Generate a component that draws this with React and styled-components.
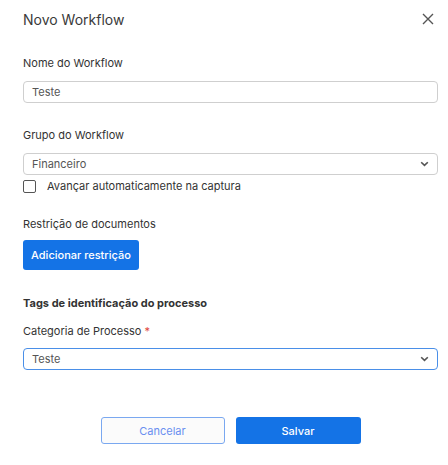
import React from "react";
import styled, { createGlobalStyle } from "styled-components";

const Global = createGlobalStyle`
  html, body { margin: 0; padding: 0; background: #fff; }
  body { font-family: Inter, "Noto Sans", sans-serif; color: #333; }
  * { box-sizing: border-box; }
`;

const Modal = styled.div`
  width: 448px;
  height: 465px;
  background: #fff;
  padding: 0 10px 0 23px;
  display: flex;
  flex-direction: column;
`;

const Header = styled.div`
  height: 38px;
  display: flex;
  align-items: center;
  justify-content: space-between;
`;

const Title = styled.h2`
  margin: 0;
  font-size: 14px;
  font-weight: 400;
  color: #3a3a3a;
`;

const CloseButton = styled.button`
  border: none;
  background: transparent;
  padding: 0;
  width: 20px;
  height: 20px;
  display: flex;
  align-items: center;
  justify-content: center;
  cursor: pointer;
`;

const Field = styled.div`
  display: flex;
  flex-direction: column;
  margin-top: ${(p) => p.$mt || 0}px;
`;

const Label = styled.label`
  font-size: 11px;
  line-height: 14px;
  color: #333;
  margin-bottom: ${(p) => p.$mb ?? 11}px;
`;

const Req = styled.span`
  color: #e0463b;
`;

const Input = styled.div`
  height: 22px;
  border: 1px solid ${(p) => (p.$focus ? "#4a8fe8" : "#cfcfcf")};
  border-radius: 4px;
  background: #fff;
  display: flex;
  align-items: center;
  justify-content: space-between;
  padding: 0 8px 0 8px;
  font-size: 11px;
  color: #555;
`;

const CheckRow = styled.div`
  display: flex;
  align-items: center;
  margin-top: 4px;
  gap: 11px;
  font-size: 11px;
  color: #333;
`;

const Box = styled.span`
  width: 13px;
  height: 13px;
  border: 1px solid #555;
  border-radius: 2px;
  background: #fff;
`;

const PrimaryButton = styled.button`
  font-family: inherit;
  height: ${(p) => p.$h || 30}px;
  width: ${(p) => p.$w}px;
  background: #1473e6;
  color: #fff;
  border: none;
  border-radius: 3px;
  font-size: 11px;
  font-weight: 500;
  padding: 0;
`;

const OutlineButton = styled.button`
  font-family: inherit;
  height: 27px;
  width: 124px;
  background: #fbfbfb;
  color: #6a8ff0;
  border: 1px solid #7aa8f0;
  border-radius: 3px;
  font-size: 11px;
  padding: 0;
`;

const SectionTitle = styled.div`
  font-size: 11px;
  font-weight: 700;
  color: #333;
  margin-top: 26px;
`;

const Footer = styled.div`
  display: flex;
  justify-content: center;
  gap: 11px;
  margin-top: 47px;
`;

const Chevron = () => (
  <svg width="9" height="6" viewBox="0 0 9 6">
    <path d="M1.2 1.2 L4.5 4.4 L7.8 1.2" fill="none" stroke="#555" strokeWidth="1.6" />
  </svg>
);

export default function App() {
  return (
    <>
      <Global />
      <Modal>
        <Header>
          <Title>Novo Workflow</Title>
          <CloseButton aria-label="Fechar">
            <svg width="12" height="12" viewBox="0 0 12 12">
              <path d="M1 1 L11 11 M11 1 L1 11" stroke="#555" strokeWidth="1.4" />
            </svg>
          </CloseButton>
        </Header>

        <Field $mt={18}>
          <Label>Nome do Workflow</Label>
          <Input>Teste</Input>
        </Field>

        <Field $mt={25}>
          <Label>Grupo do Workflow</Label>
          <Input>
            Financeiro
            <Chevron />
          </Input>
        </Field>

        <CheckRow>
          <Box />
          Avançar automaticamente na captura
        </CheckRow>

        <Field $mt={24}>
          <Label $mb={9}>Restrição de documentos</Label>
          <PrimaryButton $w={116}>Adicionar restrição</PrimaryButton>
        </Field>

        <SectionTitle>Tags de identificação do processo</SectionTitle>

        <Field $mt={14}>
          <Label $mb={10}>
            Categoria de Processo <Req>*</Req>
          </Label>
          <Input $focus>
            Teste
            <Chevron />
          </Input>
        </Field>

        <Footer>
          <OutlineButton>Cancelar</OutlineButton>
          <PrimaryButton $w={125} $h={27}>Salvar</PrimaryButton>
        </Footer>
      </Modal>
    </>
  );
}
